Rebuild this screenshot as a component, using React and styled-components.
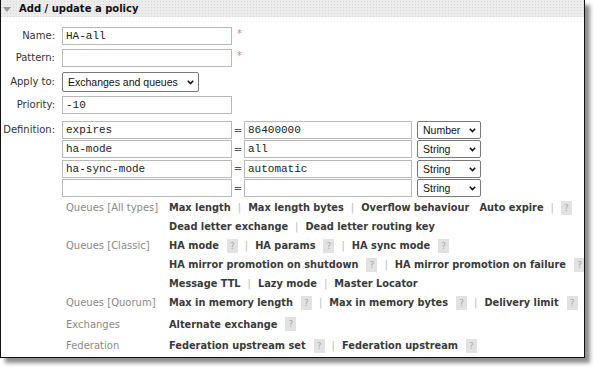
import React from "react"
import styled, { createGlobalStyle } from "styled-components"

const Global = createGlobalStyle`
  html, body {
    margin: 0;
    background: #fff;
  }
  body {
    font-family: "DejaVu Sans", Verdana, sans-serif;
  }
`

const Page = styled.div`
  width: 600px;
  height: 373px;
  background: #fff;
`

const Frame = styled.section`
  width: 583px;
  height: 357px;
  border: 1px solid #111;
  border-top: 0;
  box-shadow: 5px 5px 4px rgba(0, 0, 0, 0.45);
  background: #fff;
  display: flex;
  flex-direction: column;
  overflow: hidden;

  & > * {
    flex-shrink: 0;
  }
`

const Header = styled.h2`
  margin: 0 -1px;
  height: 17px;
  display: flex;
  align-items: center;
  gap: 8px;
  padding-left: 3px;
  font-size: 10px;
  font-weight: bold;
  color: #111;
  background-color: #ececec;
  background-image: radial-gradient(#d6d6d6 0.8px, transparent 1px);
  background-size: 3px 3px;
`

const Caret = styled.span`
  width: 0;
  height: 0;
  border-left: 4px solid transparent;
  border-right: 4px solid transparent;
  border-top: 5px solid #999;
  margin-top: 1px;
`

const Form = styled.div`
  display: grid;
  grid-template-columns: 54px auto;
  column-gap: 7px;
  row-gap: 4px;
  padding-top: 10px;
  align-items: start;
`

const Label = styled.label`
  font-size: 10px;
  color: #333;
  text-align: right;
  white-space: nowrap;
  line-height: ${p => p.$h || 18}px;
  margin-top: ${p => p.$mt || 0}px;
`

const Field = styled.div`
  display: flex;
  align-items: center;
  height: ${p => p.$h || 18}px;
`

const Input = styled.input`
  box-sizing: border-box;
  width: ${p => p.$w || 170}px;
  height: 18px;
  border: 1px solid #b9b9b9;
  padding: 0 3px;
  font-family: "Liberation Mono", "Courier New", monospace;
  font-size: 11px;
  color: #222;
  background: #fff;
  outline: none;
`

const Required = styled.span`
  color: #ec7a7a;
  font-size: 10px;
  line-height: 10px;
  margin-left: 5px;
  align-self: flex-start;
  margin-top: 2px;
`

const SelectWrap = styled.div`
  position: relative;
  display: flex;
  margin-left: ${p => p.$ml || 0}px;
`

const Select = styled.select`
  appearance: none;
  box-sizing: border-box;
  width: ${p => p.$w}px;
  height: ${p => p.$h || 18}px;
  border: 1px solid #7a7a7a;
  border-radius: 2px;
  padding: 0 0 0 5px;
  font-family: "Liberation Sans", Arial, sans-serif;
  font-size: 10.5px;
  color: #111;
  background: #fff;
  outline: none;
`

const Chevron = styled.svg`
  position: absolute;
  right: 5px;
  top: 50%;
  margin-top: -2px;
  pointer-events: none;
`

const Stack = styled.div`
  display: flex;
  flex-direction: column;
  gap: 1.4px;
  margin-top: 3px;
`

const Eq = styled.span`
  width: 12px;
  text-align: center;
  font-size: 10px;
  color: #555;
`

const Help = styled.div`
  display: grid;
  grid-template-columns: 103px auto;
  margin: 1px 0 0 65px;
`

const Cat = styled.div`
  font-size: 10px;
  color: #8a8a8a;
  line-height: 19px;
  margin-top: ${p => p.$mt || 0}px;
`

const Links = styled.div`
  display: flex;
  flex-direction: column;
  margin-top: ${p => p.$mt || 0}px;
`

const Line = styled.div`
  display: flex;
  align-items: center;
  height: 19px;
  white-space: nowrap;
`

const Opt = styled.span`
  font-size: 9.8px;
  font-weight: bold;
  color: #3a3a3a;
  margin-left: ${p => p.$ml || 0}px;
`

const Sep = styled.span`
  font-size: 10px;
  color: #bbb;
  margin: 0 7px;
`

const Q = styled.span`
  display: inline-flex;
  align-items: center;
  justify-content: center;
  width: 11px;
  height: 14px;
  margin-left: ${p => p.$ml ?? 8}px;
  background: #e2e2e2;
  color: #a8a8a8;
  font-size: 9px;
`

const Arrow = () => (
  <Chevron width="7" height="5" viewBox="0 0 7 5">
    <path d="M0.8 0.8 L3.5 3.6 L6.2 0.8" fill="none" stroke="#111" strokeWidth="1.5" />
  </Chevron>
)

const TypeSelect = ({ value }) => (
  <SelectWrap $ml={5}>
    <Select $w={64} defaultValue={value}>
      <option>Number</option>
      <option>String</option>
      <option>Boolean</option>
      <option>List</option>
    </Select>
    <Arrow />
  </SelectWrap>
)

const defs = [
  ["expires", "86400000", "Number"],
  ["ha-mode", "all", "String"],
  ["ha-sync-mode", "automatic", "String"],
  ["", "", "String"],
]

export default function App() {
  return (
    <Page>
      <Global />
      <Frame>
        <Header>
          <Caret />
          Add / update a policy
        </Header>

        <Form>
          <Label>Name:</Label>
          <Field>
            <Input defaultValue="HA-all" />
            <Required>*</Required>
          </Field>

          <Label>Pattern:</Label>
          <Field>
            <Input defaultValue="" />
            <Required>*</Required>
          </Field>

          <Label $h={20} $mt={1}>Apply to:</Label>
          <Field $h={20} style={{ marginTop: 1 }}>
            <SelectWrap>
              <Select $w={137} $h={20} defaultValue="eq">
                <option value="eq">Exchanges and queues</option>
                <option value="e">Exchanges</option>
                <option value="q">Queues</option>
              </Select>
              <Arrow />
            </SelectWrap>
          </Field>

          <Label>Priority:</Label>
          <Field>
            <Input defaultValue="-10" />
          </Field>

          <Label $mt={3}>Definition:</Label>
          <Stack>
            {defs.map(([k, v, t], i) => (
              <Field key={i}>
                <Input defaultValue={k} />
                <Eq>=</Eq>
                <Input $w={168} defaultValue={v} />
                <TypeSelect value={t} />
              </Field>
            ))}
          </Stack>
        </Form>

        <Help>
          <Cat>Queues [All types]</Cat>
          <Links>
            <Line>
              <Opt>Max length</Opt>
              <Sep>|</Sep>
              <Opt>Max length bytes</Opt>
              <Sep>|</Sep>
              <Opt>Overflow behaviour</Opt>
              <Opt $ml={10}>Auto expire</Opt>
              <Sep>|</Sep>
              <Q $ml={0}>?</Q>
            </Line>
            <Line>
              <Opt>Dead letter exchange</Opt>
              <Sep>|</Sep>
              <Opt>Dead letter routing key</Opt>
            </Line>
          </Links>

          <Cat>Queues [Classic]</Cat>
          <Links>
            <Line>
              <Opt>HA mode</Opt>
              <Q>?</Q>
              <Sep>|</Sep>
              <Opt>HA params</Opt>
              <Q>?</Q>
              <Sep>|</Sep>
              <Opt>HA sync mode</Opt>
              <Q>?</Q>
            </Line>
            <Line>
              <Opt>HA mirror promotion on shutdown</Opt>
              <Q>?</Q>
              <Sep>|</Sep>
              <Opt>HA mirror promotion on failure</Opt>
              <Q>?</Q>
            </Line>
            <Line>
              <Opt>Message TTL</Opt>
              <Sep>|</Sep>
              <Opt>Lazy mode</Opt>
              <Sep>|</Sep>
              <Opt>Master Locator</Opt>
            </Line>
          </Links>

          <Cat>Queues [Quorum]</Cat>
          <Links>
            <Line>
              <Opt>Max in memory length</Opt>
              <Q>?</Q>
              <Sep>|</Sep>
              <Opt>Max in memory bytes</Opt>
              <Q>?</Q>
              <Sep>|</Sep>
              <Opt>Delivery limit</Opt>
              <Q>?</Q>
            </Line>
          </Links>

          <Cat $mt={2.5}>Exchanges</Cat>
          <Links $mt={2.5}>
            <Line>
              <Opt>Alternate exchange</Opt>
              <Q>?</Q>
            </Line>
          </Links>

          <Cat $mt={2.5}>Federation</Cat>
          <Links $mt={2.5}>
            <Line>
              <Opt>Federation upstream set</Opt>
              <Q>?</Q>
              <Sep>|</Sep>
              <Opt>Federation upstream</Opt>
              <Q>?</Q>
            </Line>
          </Links>
        </Help>
      </Frame>
    </Page>
  )
}
